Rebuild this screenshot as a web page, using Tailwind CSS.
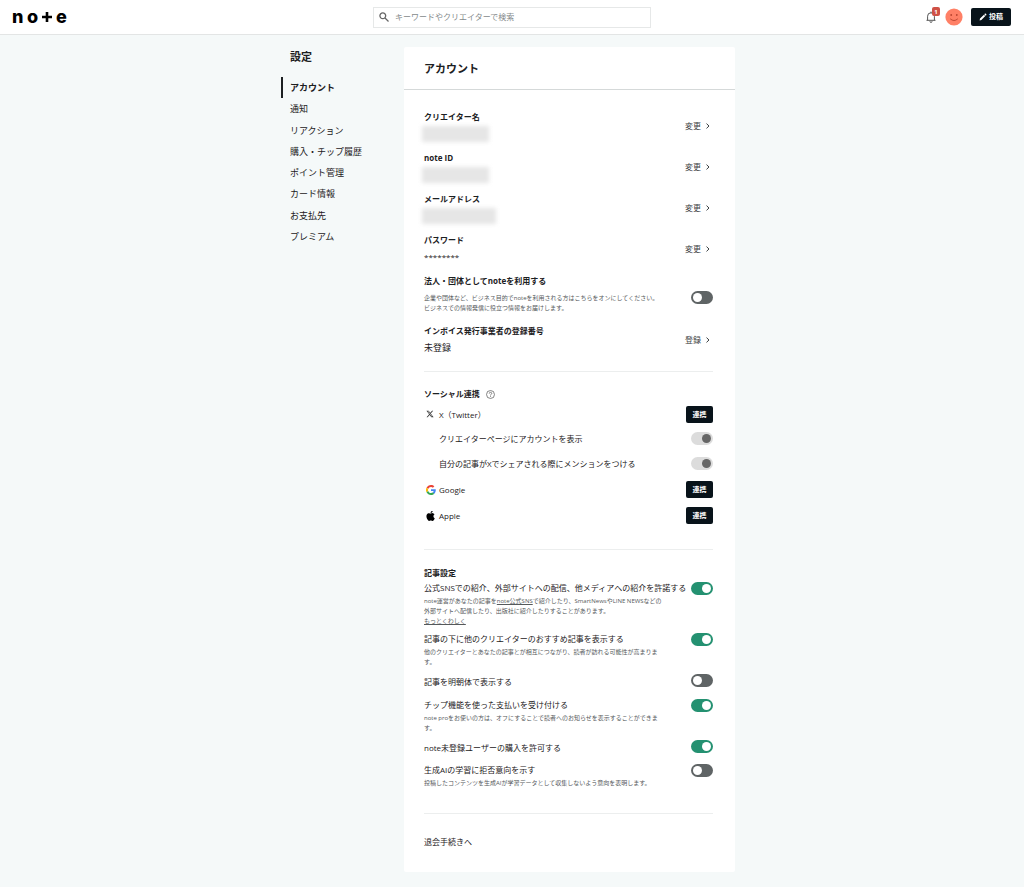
<!DOCTYPE html>
<html lang="ja">
<head>
<meta charset="utf-8">
<meta name="viewport" content="width=device-width, initial-scale=1">
<title>アカウント設定</title>
<script src="https://cdn.jsdelivr.net/npm/@tailwindcss/browser@4"></script>
</head>
<body class="min-h-screen bg-[#f5f9f9] font-['Open_Sans','Noto_Sans_CJK_JP',sans-serif] text-[8px] leading-3 text-[#1c2022]">
<svg class="hidden">
  <symbol id="chev" viewBox="0 0 6 8"><path d="M1.5 1.6 4 4 1.500 6.400" fill="none" stroke="currentColor" stroke-width="1"/></symbol>
</svg>

<header class="grid h-[35px] grid-cols-[1fr_278px_1fr] items-center border-b border-[#e3e5e5] bg-white px-3">
  <a href="#" aria-label="note" class="flex items-center gap-1 font-[Inter,sans-serif] text-[18px] font-extrabold leading-4 text-black">
    <span class="w-[11px]">n</span><span class="w-[11px]">o</span>
    <svg class="mb-px size-[10px]" viewBox="0 0 10 10"><path d="M5 0v10M0 5h10" stroke="#000" stroke-width="2.6"/></svg>
    <span>e</span>
  </a>
  <label class="flex h-[21px] items-center gap-1.5 border border-[#e6e8e8] bg-white pl-[5px]">
    <svg class="size-[10px] shrink-0 text-[#666]" viewBox="0 0 10 10" fill="none" stroke="currentColor" stroke-width="1.3"><circle cx="3.8" cy="3.8" r="2.9"/><path d="m6 6 3.5 3.5"/></svg>
    <input type="search" aria-label="検索" placeholder="キーワードやクリエイターで検索" class="w-full bg-transparent outline-none placeholder:text-[#858a8b]">
  </label>
  <div class="flex items-center justify-end gap-2 pr-px">
    <button aria-label="お知らせ 1件" class="relative">
      <svg class="size-3 text-[#555]" viewBox="0 0 12 12" fill="none" stroke="currentColor" stroke-width="1"><path d="M1.500 9.300h9M2.600 9.300V5.200a3.400 3.400 0 0 1 6.800 0v4.100M6 1.800V.6M4.900 10.300a1.100 1.100 0 0 0 2.200 0"/></svg>
      <span class="absolute -top-1 left-[7px] flex h-[9px] w-2 items-center justify-center rounded-xs bg-[#cf5146] text-[6px] leading-none font-bold text-white">1</span>
    </button>
    <button aria-label="プロフィール">
      <svg class="size-[18px]" viewBox="0 0 18 18"><circle cx="9" cy="9" r="8.6" fill="#ff8066"/><circle cx="6.2" cy="7" r=".9" fill="#b8432f"/><circle cx="11.8" cy="7" r=".9" fill="#b8432f"/><path d="M5.2 10.8q3.800 3.400 7.600 0" fill="none" stroke="#b8432f" stroke-width=".9"/></svg>
    </button>
    <button class="flex h-[18px] w-10 items-center justify-center gap-0.5 rounded-xs bg-[#08131a] text-[7px] font-bold text-white">
      <svg class="size-2" viewBox="0 0 8 8" fill="#fff"><path d="M.6 7.400 1 5.600l3.900-3.900 1.400 1.400-3.900 3.900zM5.300 1.300 6 .6q.3-.3.6 0l.8.8q.3.3 0 .6l-.7.7z"/></svg>投稿
    </button>
  </div>
</header>

<div class="mx-auto flex max-w-[462px] pt-3">
  <nav aria-label="設定" class="w-[123px] shrink-0">
    <h2 class="pl-[9px] pt-0.5 text-[11px] font-bold leading-4">設定</h2>
    <ul class="mt-3 text-[9px] leading-[21px]">
      <li><a href="#" aria-current="page" class="block border-l-2 border-[#1c2022] pl-[7px] font-bold">アカウント</a></li>
      <li><a href="#" class="block pl-[9px]">通知</a></li>
      <li class="pt-px"><a href="#" class="block pl-[9px]">リアクション</a></li>
      <li><a href="#" class="block pl-[9px]">購入・チップ履歴</a></li>
      <li><a href="#" class="block pl-[9px]">ポイント管理</a></li>
      <li><a href="#" class="block pl-[9px]">カード情報</a></li>
      <li class="pt-px"><a href="#" class="block pl-[9px]">お支払先</a></li>
      <li><a href="#" class="block pl-[9px]">プレミアム</a></li>
    </ul>
  </nav>

  <main class="mr-2 mb-4 flex-1 rounded-xs bg-white">
    <h1 class="border-b border-[#d5d9d9] px-5 pt-3.5 pb-3 text-[11px] font-bold leading-4">アカウント</h1>
    <div class="pr-[22px] pl-5">

      <section class="flex flex-col gap-2.5 border-b border-[#eceeee] pt-[21px] pb-[17px]">
        <div class="flex items-center justify-between">
          <div><h3 class="font-bold">クリエイター名</h3><div class="mt-[3px] -ml-0.5 h-4 w-[67px] bg-[#e6e6e6] blur-[2px]"></div></div>
          <button class="flex items-center gap-1 pr-0.5 pb-0.5 text-[#3c4143]">変更<svg class="h-2 w-1.5"><use href="#chev"/></svg></button>
        </div>
        <div class="flex items-center justify-between">
          <div><h3 class="font-bold">note ID</h3><div class="mt-[3px] -ml-0.5 h-4 w-[67px] bg-[#e6e6e6] blur-[2px]"></div></div>
          <button class="flex items-center gap-1 pr-0.5 pb-0.5 text-[#3c4143]">変更<svg class="h-2 w-1.5"><use href="#chev"/></svg></button>
        </div>
        <div class="flex items-center justify-between">
          <div><h3 class="font-bold">メールアドレス</h3><div class="mt-[3px] -ml-0.5 h-4 w-[74px] bg-[#e6e6e6] blur-[2px]"></div></div>
          <button class="flex items-center gap-1 pr-0.5 pb-0.5 text-[#3c4143]">変更<svg class="h-2 w-1.5"><use href="#chev"/></svg></button>
        </div>
        <div class="flex items-center justify-between">
          <div><h3 class="font-bold">パスワード</h3><p class="mt-[3px] h-4 leading-4">********</p></div>
          <button class="flex items-center gap-1 pr-0.5 pb-0.5 text-[#3c4143]">変更<svg class="h-2 w-1.5"><use href="#chev"/></svg></button>
        </div>
        <div class="flex items-start justify-between">
          <div><label for="corp" class="block font-bold">法人・団体としてnoteを利用する</label><p class="mt-1.5 text-[6px] leading-[10px] text-[#55595b]">企業や団体など、ビジネス目的でnoteを利用される方はこちらをオンにしてください。<br>ビジネスでの情報発信に役立つ情報をお届けします。</p></div>
          <input id="corp" type="checkbox" class="mt-4 h-[13px] w-[22px] shrink-0 appearance-none rounded-full bg-[#5f6465] p-0.5 before:block before:size-[9px] before:rounded-full before:bg-white checked:bg-[#249171] checked:before:ml-[9px]">
        </div>
        <div class="mt-0.5 flex items-center justify-between">
          <div><h3 class="font-bold">インボイス発行事業者の登録番号</h3><p class="mt-1 text-[9px] leading-[13px]">未登録</p></div>
          <button class="flex items-center gap-1 pr-0.5 text-[#3c4143]">登録<svg class="h-2 w-1.5"><use href="#chev"/></svg></button>
        </div>
      </section>

      <section class="border-b border-[#eceeee] pt-4 pb-[25px]">
        <h2 class="flex items-center gap-1.5 font-bold">ソーシャル連携
          <button aria-label="ヘルプ" class="text-[#555]"><svg class="size-[9px]" viewBox="0 0 10 10" fill="none" stroke="currentColor" stroke-width=".8"><circle cx="5" cy="5" r="4.4"/><path d="M3.600 4q0-1.400 1.400-1.400T6.400 3.900Q6.400 4.700 5 5.400v.6M5 6.800v.9"/></svg></button>
        </h2>
        <div class="mt-1.5 flex items-center justify-between">
          <span class="flex items-center gap-[5px]"><svg class="mb-0.5 ml-0.5 size-2" viewBox="0 0 24 24" fill="#333"><path d="M18.200 2.300h3.300l-7.200 8.200 8.500 11.200h-6.700l-5.200-6.800-6 6.800H1.700l7.700-8.800L1.300 2.300H8l4.700 6.200zm-1.100 17.500h1.800L7 4.100H5.100z"/></svg><span>X（Twitter）</span></span>
          <button class="h-[17px] w-[27px] rounded-xs bg-[#08131a] text-[7px] font-bold text-white">連携</button>
        </div>
        <div class="mt-2 flex items-center justify-between pl-[15px]">
          <label for="xshow" class="pt-0.5">クリエイターページにアカウントを表示</label>
          <input id="xshow" type="checkbox" disabled class="h-[13px] w-[22px] shrink-0 appearance-none rounded-full bg-[#dcdcdc] p-0.5 before:ml-[9px] before:block before:size-[9px] before:rounded-full before:bg-[#666]">
        </div>
        <div class="mt-[11px] flex items-center justify-between pl-[15px]">
          <label for="xmention" class="pt-0.5">自分の記事がXでシェアされる際にメンションをつける</label>
          <input id="xmention" type="checkbox" disabled class="h-[13px] w-[22px] shrink-0 appearance-none rounded-full bg-[#dcdcdc] p-0.5 before:ml-[9px] before:block before:size-[9px] before:rounded-full before:bg-[#666]">
        </div>
        <div class="mt-[11px] flex items-center justify-between">
          <span class="flex items-center gap-[3px]"><svg class="ml-0.5 size-[10px]" viewBox="0 0 48 48"><path fill="#EA4335" d="M24 9.500c3.500 0 6.700 1.200 9.200 3.600l6.900-6.900C35.900 2.400 30.500 0 24 0 14.600 0 6.500 5.400 2.600 13.200l8 6.200C12.400 13.700 17.700 9.500 24 9.500z"/><path fill="#4285F4" d="M47 24.500c0-1.600-.2-3.100-.4-4.500H24v9h12.900c-.6 3-2.300 5.500-4.800 7.200l7.700 6C44.400 38 47 31.800 47 24.500z"/><path fill="#FBBC05" d="M10.500 28.600a14.500 14.500 0 0 1 0-9.200l-8-6.200a24 24 0 0 0 0 21.600z"/><path fill="#34A853" d="M24 48c6.500 0 11.900-2.100 15.900-5.800l-7.700-6c-2.200 1.500-4.900 2.300-8.200 2.300-6.300 0-11.600-4.200-13.500-9.900l-8 6.200C6.500 42.600 14.600 48 24 48z"/></svg>Google</span>
          <button class="h-[17px] w-[27px] rounded-xs bg-[#08131a] text-[7px] font-bold text-white">連携</button>
        </div>
        <div class="mt-[9px] flex items-center justify-between">
          <span class="flex items-center gap-[3px]"><svg class="ml-0.5 size-[10px]" viewBox="0 0 24 24"><path d="M17.050 12.700c0-2.500 2-3.700 2.100-3.800-1.200-1.700-3-1.900-3.600-2-1.500-.2-3 .9-3.800.9s-2-.9-3.200-.8c-1.700 0-3.200 1-4.100 2.400-1.700 3-.4 7.500 1.300 9.900.8 1.200 1.800 2.600 3.100 2.500 1.300 0 1.700-.8 3.200-.8s1.900.8 3.200.8 2.200-1.200 3-2.400c.9-1.400 1.300-2.700 1.400-2.800-.1 0-2.600-1-2.600-3.900zM14.600 5.400c.7-.8 1.100-2 1-3.100-1 0-2.200.7-2.900 1.500-.6.7-1.200 1.900-1 3 1.100.1 2.200-.6 2.900-1.400z" transform="translate(-3.500 -3.500) scale(1.250)"/></svg>Apple</span>
          <button class="h-[17px] w-[27px] rounded-xs bg-[#08131a] text-[7px] font-bold text-white">連携</button>
        </div>
      </section>

      <section class="border-b border-[#eceeee] pt-[17px] pb-[25px]">
        <h2 class="font-bold">記事設定</h2>
        <div class="mt-[3px] flex items-start justify-between">
          <div><label for="o1" class="block">公式SNSでの紹介、外部サイトへの配信、他メディアへの紹介を許諾する</label><p class="mt-0.5 text-[6px] leading-[10px] text-[#55595b]">note運営があなたの記事を<a href="#" class="underline">note公式SNS</a>で紹介したり、SmartNewsやLINE NEWSなどの<br>外部サイトへ配信したり、出版社に紹介したりすることがあります。<br><a href="#" class="underline">もっとくわしく</a></p></div>
          <input id="o1" type="checkbox" checked class="h-[13px] w-[22px] shrink-0 appearance-none rounded-full bg-[#5f6465] p-0.5 before:block before:size-[9px] before:rounded-full before:bg-white checked:bg-[#249171] checked:before:ml-[9px]">
        </div>
        <div class="mt-[7px] flex items-start justify-between">
          <div><label for="o2" class="block">記事の下に他のクリエイターのおすすめ記事を表示する</label><p class="mt-0.5 text-[6px] leading-[10px] text-[#55595b]">他のクリエイターとあなたの記事とが相互につながり、読者が訪れる可能性が高まりま<br>す。</p></div>
          <input id="o2" type="checkbox" checked class="h-[13px] w-[22px] shrink-0 appearance-none rounded-full bg-[#5f6465] p-0.5 before:block before:size-[9px] before:rounded-full before:bg-white checked:bg-[#249171] checked:before:ml-[9px]">
        </div>
        <div class="mt-[7px] flex items-start justify-between">
          <label for="o3" class="mt-0.5 block">記事を明朝体で表示する</label>
          <input id="o3" type="checkbox" class="h-[13px] w-[22px] shrink-0 appearance-none rounded-full bg-[#5f6465] p-0.5 before:block before:size-[9px] before:rounded-full before:bg-white checked:bg-[#249171] checked:before:ml-[9px]">
        </div>
        <div class="mt-[11px] flex items-start justify-between">
          <div><label for="o4" class="block">チップ機能を使った支払いを受け付ける</label><p class="mt-0.5 text-[6px] leading-[10px] text-[#55595b]">note proをお使いの方は、オフにすることで読者へのお知らせを表示することができま<br>す。</p></div>
          <input id="o4" type="checkbox" checked class="h-[13px] w-[22px] shrink-0 appearance-none rounded-full bg-[#5f6465] p-0.5 before:block before:size-[9px] before:rounded-full before:bg-white checked:bg-[#249171] checked:before:ml-[9px]">
        </div>
        <div class="mt-[7px] flex items-start justify-between">
          <label for="o5" class="mt-0.5 block">note未登録ユーザーの購入を許可する</label>
          <input id="o5" type="checkbox" checked class="h-[13px] w-[22px] shrink-0 appearance-none rounded-full bg-[#5f6465] p-0.5 before:block before:size-[9px] before:rounded-full before:bg-white checked:bg-[#249171] checked:before:ml-[9px]">
        </div>
        <div class="mt-2.5 flex items-start justify-between">
          <div><label for="o6" class="block">生成AIの学習に拒否意向を示す</label><p class="mt-0.5 text-[6px] leading-[10px] text-[#55595b]">投稿したコンテンツを生成AIが学習データとして収集しないよう意向を表明します。</p></div>
          <input id="o6" type="checkbox" class="h-[13px] w-[22px] shrink-0 appearance-none rounded-full bg-[#5f6465] p-0.5 before:block before:size-[9px] before:rounded-full before:bg-white checked:bg-[#249171] checked:before:ml-[9px]">
        </div>
      </section>

      <a href="#" class="block pt-[22px] pb-6">退会手続きへ</a>
    </div>
  </main>
</div>
</body>
</html>
